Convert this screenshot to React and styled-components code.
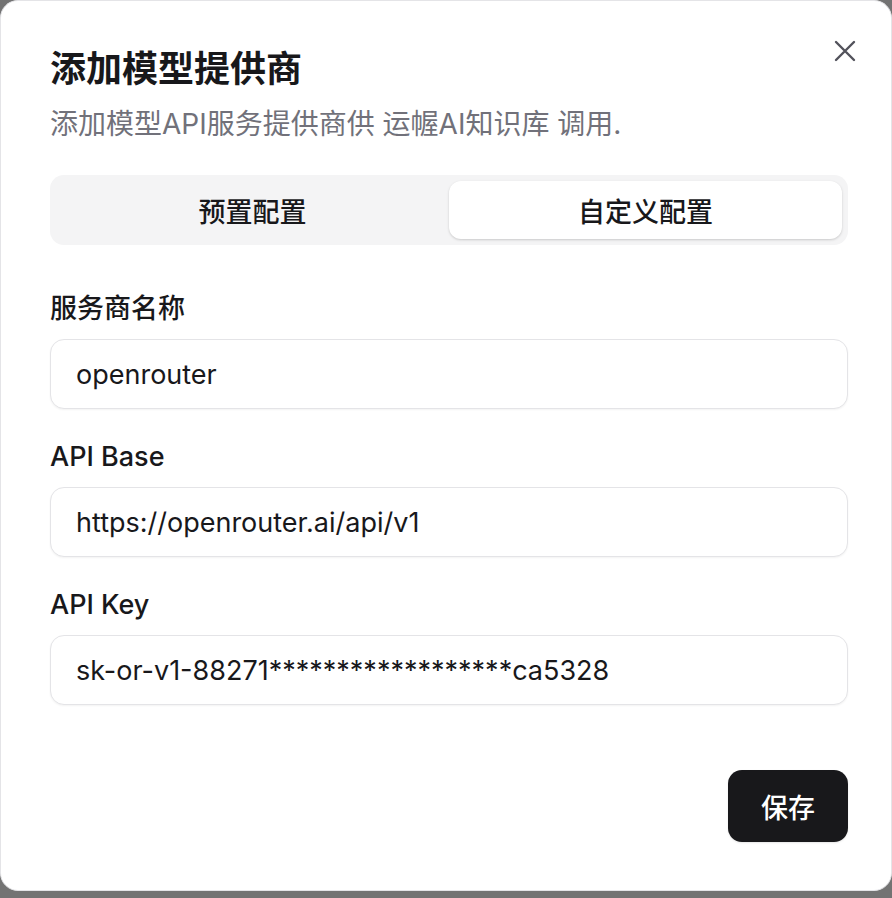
import React, { useState } from 'react';
import styled, { createGlobalStyle } from 'styled-components';

const GlobalStyle = createGlobalStyle`
    html, body {
        margin: 0;
        padding: 0;
        background: #737373;
    }
    * {
        box-sizing: border-box;
    }
`;

const Dialog = styled.div`
    position: relative;
    width: 892px;
    height: 891px;
    background: #fff;
    border: 1px solid #e4e4e7;
    border-radius: 18px;
    padding: 46px 43px 48px 49px;
    display: flex;
    flex-direction: column;
    font-family: Inter, 'Noto Sans CJK SC', sans-serif;
    color: #18181b;
`;

const Title = styled.h2`
    margin: 0;
    font-size: 36px;
    line-height: 44px;
    font-weight: 600;
`;

const Subtitle = styled.p`
    margin: 14px 0 0;
    font-size: 28px;
    line-height: 38px;
    color: #71717a;
`;

const CloseButton = styled.button`
    position: absolute;
    top: 30px;
    right: 26px;
    width: 40px;
    height: 40px;
    border: none;
    background: transparent;
    display: flex;
    align-items: center;
    justify-content: center;
    cursor: pointer;
    padding: 0;
    color: #52525b;
`;

const Tabs = styled.div`
    margin-top: 32px;
    height: 70px;
    background: #f4f4f5;
    border-radius: 14px;
    padding: 6px;
    display: grid;
    grid-template-columns: 1fr 1fr;
`;

const Tab = styled.button`
    border: none;
    border-radius: 12px;
    font-family: inherit;
    font-size: 27px;
    font-weight: 500;
    color: #18181b;
    background: ${(p) => (p.active ? '#fff' : 'transparent')};
    box-shadow: ${(p) =>
        p.active ? '0 1px 3px rgba(0,0,0,0.12), 0 1px 2px rgba(0,0,0,0.06)' : 'none'};
    cursor: pointer;
`;

const Fields = styled.div`
    margin-top: 46px;
    display: flex;
    flex-direction: column;
    gap: 30px;
`;

const Field = styled.div`
    display: flex;
    flex-direction: column;
    gap: 12px;
`;

const Label = styled.label`
    font-size: 27px;
    line-height: 36px;
    font-weight: 500;
`;

const Input = styled.input`
    height: 70px;
    border: 1.5px solid #e4e4e7;
    border-radius: 14px;
    padding: 0 25px;
    font-family: inherit;
    font-size: 27px;
    color: #18181b;
    background: #fff;
    box-shadow: 0 1px 2px rgba(0,0,0,0.05);
    outline: none;
`;

const Footer = styled.div`
    margin-top: auto;
    display: flex;
    justify-content: flex-end;
`;

const SaveButton = styled.button`
    width: 120px;
    height: 72px;
    border: none;
    border-radius: 14px;
    background: #18181b;
    color: #fff;
    font-family: inherit;
    font-size: 27px;
    font-weight: 500;
    cursor: pointer;
    box-shadow: 0 1px 2px rgba(0,0,0,0.1);
`;

const fields = [
    { label: '服务商名称', value: 'openrouter' },
    { label: 'API Base', value: 'https://openrouter.ai/api/v1' },
    { label: 'API Key', value: 'sk-or-v1-88271******************ca5328' },
];

export default function App() {
    const [tab, setTab] = useState('custom');

    return (
        <>
            <GlobalStyle />
            <Dialog>
                <CloseButton aria-label="关闭">
                    <svg width="22" height="22" viewBox="0 0 22 22" fill="none">
                        <path
                            d="M2 2L20 20M20 2L2 20"
                            stroke="currentColor"
                            strokeWidth="2.4"
                            strokeLinecap="round"
                        />
                    </svg>
                </CloseButton>
                <Title>添加模型提供商</Title>
                <Subtitle>添加模型API服务提供商供 运幄AI知识库 调用.</Subtitle>
                <Tabs>
                    <Tab active={tab === 'preset'} onClick={() => setTab('preset')}>
                        预置配置
                    </Tab>
                    <Tab active={tab === 'custom'} onClick={() => setTab('custom')}>
                        自定义配置
                    </Tab>
                </Tabs>
                <Fields>
                    {fields.map((f) => (
                        <Field key={f.label}>
                            <Label>{f.label}</Label>
                            <Input defaultValue={f.value} />
                        </Field>
                    ))}
                </Fields>
                <Footer>
                    <SaveButton>保存</SaveButton>
                </Footer>
            </Dialog>
        </>
    );
}
